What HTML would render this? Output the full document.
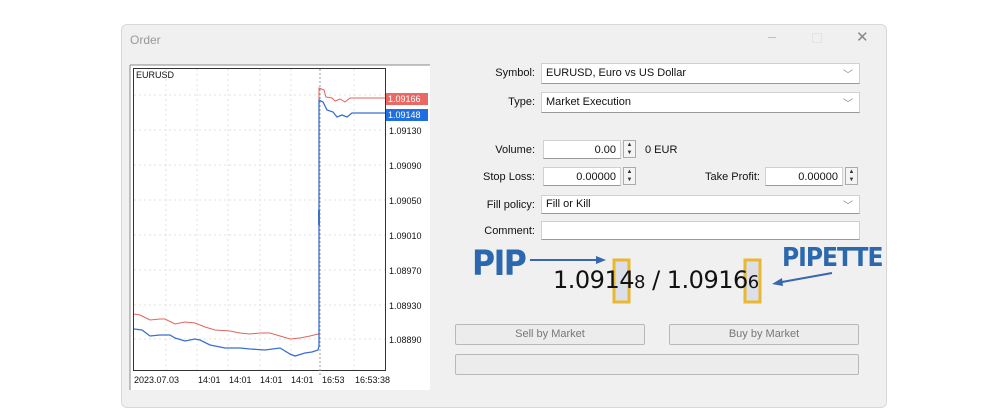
<!DOCTYPE html>
<html><head><meta charset="utf-8"><style>
body{margin:0;width:1000px;height:408px;background:#fff;position:relative;overflow:hidden;font-family:"Liberation Sans",sans-serif;font-size:11px;color:#111}
.a{position:absolute}
.win{left:121px;top:24px;width:764px;height:382px;background:#f0f0f0;border:1px solid #d8d8d8;border-radius:6px}
.lbl{position:absolute;text-align:right;width:120px;font-size:11px}
.box{position:absolute;background:#fff;border:1px solid #d0d0d0;border-bottom:1px solid #999;box-sizing:border-box;font-size:11px;padding:3px 4px}
.chev{position:absolute;right:6px;top:2px;color:#888;font-size:10px}
.spin{position:absolute;width:13px;height:18px;border:1px solid #aaa;box-sizing:border-box;background:#f4f4f4;font-size:6px;line-height:8px;text-align:center;color:#333}
.btn{position:absolute;border:1px solid #b8b8b8;border-radius:2px;background:#ececec;box-sizing:border-box;text-align:center;color:#777;font-size:11px;line-height:19px}
</style></head><body>
<div class="a win"></div>
<div class="a" style="left:130px;top:33px;color:#999;font-size:12px">Order</div>
<div class="a" style="left:768px;top:28px;color:#bbb;font-size:14px">–</div>
<div class="a" style="left:812px;top:33px;width:8px;height:8px;border:1px solid #e4e4e4"></div>
<div class="a" style="left:856px;top:28px;color:#888;font-size:15px">✕</div>

<svg class="a" style="left:0;top:0" width="1000" height="408">
<rect x="130" y="65" width="300" height="325" fill="#fff"/>
<line x1="130" y1="65" x2="430" y2="65" stroke="#888"/>
<line x1="130" y1="65" x2="130" y2="390" stroke="#888"/>
<rect x="133.5" y="68.5" width="252" height="302" fill="none" stroke="#333"/>
<g stroke="#e2e2e2" stroke-dasharray="2,3">
<line x1="134" y1="95" x2="385" y2="95"/><line x1="134" y1="130" x2="385" y2="130"/><line x1="134" y1="165" x2="385" y2="165"/><line x1="134" y1="200" x2="385" y2="200"/><line x1="134" y1="235" x2="385" y2="235"/><line x1="134" y1="270" x2="385" y2="270"/><line x1="134" y1="305" x2="385" y2="305"/><line x1="134" y1="339" x2="385" y2="339"/>
<line x1="166" y1="69" x2="166" y2="370"/><line x1="197" y1="69" x2="197" y2="370"/><line x1="228" y1="69" x2="228" y2="370"/><line x1="260" y1="69" x2="260" y2="370"/><line x1="291" y1="69" x2="291" y2="370"/><line x1="354" y1="69" x2="354" y2="370"/>
</g>
<line x1="320" y1="69" x2="320" y2="375" stroke="#999" stroke-dasharray="2,2"/>
<polyline fill="none" stroke="#e0665c" stroke-width="1" points="134,314 140,315 150,320 160,319 165,319 175,324 185,322 195,323 205,327 215,330 230,331 240,333 250,334 260,333 270,333 280,336 290,339 300,338 310,336 318,334 319,334 319,88 324,90 326,97 332,98 335,101 340,99 345,102 350,98 385,98"/>
<polyline fill="none" stroke="#3a6fd0" stroke-width="1.3" points="134,329 142,330 150,336 160,335 170,335 175,338 185,341 195,339 200,340 210,345 225,348 240,348 250,349 265,350 280,348 290,354 295,356 305,353 312,352 318,350 319,346 319,100 323,102 327,110 333,112 337,117 342,115 347,117 352,113 385,113"/>
<line x1="319" y1="210" x2="319" y2="225" stroke="#3a6fd0" stroke-width="2"/>
<rect x="386" y="93" width="42" height="12" fill="#e96a64"/>
<rect x="386" y="109" width="42" height="12" fill="#1f6fe0"/>
<g font-family="Liberation Sans" font-size="9" fill="#111">
<text x="136" y="78">EURUSD</text>
<text x="388" y="102" fill="#fff">1.09166</text>
<text x="388" y="118" fill="#fff">1.09148</text>
<text x="389" y="134">1.09130</text><text x="389" y="169">1.09090</text><text x="389" y="204">1.09050</text><text x="389" y="239">1.09010</text><text x="389" y="274">1.08970</text><text x="389" y="309">1.08930</text><text x="389" y="343">1.08890</text>
<text x="134" y="383">2023.07.03</text><text x="198" y="383">14:01</text><text x="229" y="383">14:01</text><text x="260" y="383">14:01</text><text x="291" y="383">14:01</text><text x="322" y="383">16:53</text><text x="355" y="383">16:53:38</text>
</g>
<line x1="530" y1="260" x2="596" y2="260" stroke="#3a66b0" stroke-width="2"/>
<polygon points="596,256 606,260 596,264" fill="#3a66b0"/>
<line x1="832" y1="273" x2="782" y2="282" stroke="#3a66b0" stroke-width="2"/>
<polygon points="782,278 772,284 783,286" fill="#3a66b0"/>
<rect x="614" y="260" width="15" height="42" fill="#c8cde0" fill-opacity="0.5" stroke="#e8b830" stroke-width="3"/>
<rect x="745" y="260" width="15" height="42" fill="#c8cde0" fill-opacity="0.5" stroke="#e8b830" stroke-width="3"/>
</svg>

<div class="lbl" style="left:415px;top:67px">Symbol:</div>
<div class="box" style="left:541px;top:63px;width:319px;height:21px">EURUSD, Euro vs US Dollar<span class="chev">﹀</span></div>
<div class="lbl" style="left:415px;top:96px">Type:</div>
<div class="box" style="left:541px;top:92px;width:319px;height:21px">Market Execution<span class="chev">﹀</span></div>
<div class="lbl" style="left:415px;top:144px">Volume:</div>
<div class="box" style="left:543px;top:140px;width:78px;height:19px;text-align:right">0.00</div>
<div class="spin" style="left:623px;top:140px">▲<br>▼</div>
<div class="a" style="left:645px;top:144px">0 EUR</div>
<div class="lbl" style="left:415px;top:171px">Stop Loss:</div>
<div class="box" style="left:543px;top:167px;width:78px;height:19px;text-align:right">0.00000</div>
<div class="spin" style="left:623px;top:167px">▲<br>▼</div>
<div class="lbl" style="left:640px;top:171px">Take Profit:</div>
<div class="box" style="left:765px;top:167px;width:78px;height:19px;text-align:right">0.00000</div>
<div class="spin" style="left:845px;top:167px">▲<br>▼</div>
<div class="lbl" style="left:415px;top:199px">Fill policy:</div>
<div class="box" style="left:541px;top:195px;width:319px;height:19px;padding-top:2px">Fill or Kill<span class="chev" style="top:1px">﹀</span></div>
<div class="lbl" style="left:415px;top:225px">Comment:</div>
<div class="box" style="left:541px;top:221px;width:319px;height:19px"></div>

<div class="a" style="left:472px;top:244px;font-size:35px;font-weight:bold;color:#2c68ad;font-family:'DejaVu Sans Condensed','DejaVu Sans',sans-serif;letter-spacing:-1.5px">PIP</div>
<div class="a" style="left:782px;top:243px;font-size:26px;font-weight:bold;color:#2c68ad;font-family:'DejaVu Sans Condensed','DejaVu Sans',sans-serif;letter-spacing:-1px">PIPETTE</div>
<div class="a" style="left:553px;top:266px;font-size:24px;color:#111;font-family:'DejaVu Sans',sans-serif;letter-spacing:-0.5px">1.0914<span style="font-size:18px">8</span> / 1.0916<span style="font-size:18px">6</span></div>

<div class="btn" style="left:455px;top:324px;width:190px;height:21px">Sell by Market</div>
<div class="btn" style="left:669px;top:324px;width:190px;height:21px">Buy by Market</div>
<div class="btn" style="left:455px;top:354px;width:404px;height:21px"></div>
</body></html>
